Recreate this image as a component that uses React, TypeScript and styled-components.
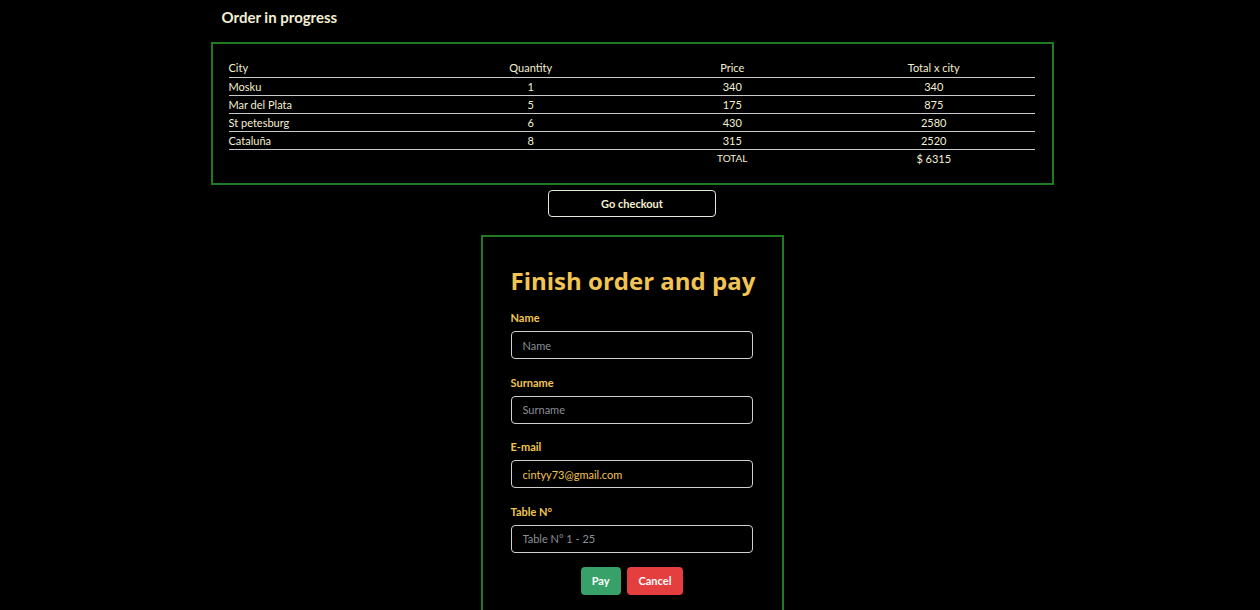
import React from "react";
import styled, { createGlobalStyle } from "styled-components";

const Global = createGlobalStyle`
  html, body { margin: 0; padding: 0; background: #000; }
  body { font-family: "Lato", "Noto Sans", sans-serif; color: #f3efd4; }
  * { box-sizing: border-box; }
`;

const Shell = styled.div`
  padding-left: 4px;
`;

const Page = styled.div`
  width: 843px;
  margin: 0 auto;
  padding-top: 8px;
  display: flex;
  flex-direction: column;
  align-items: center;
`;

const Title = styled.h2`
  align-self: stretch;
  margin: 0;
  padding-left: 11px;
  font-size: 15px;
  line-height: 18px;
  font-weight: 700;
  color: #f3efd4;
`;

const OrderBox = styled.section`
  width: 100%;
  margin-top: 16px;
  border: 2px solid #1f7a22;
  padding: 15px 17px 16px 16px;
`;

const Table = styled.table`
  width: 100%;
  table-layout: fixed;
  border-collapse: collapse;
  font-size: 11px;
  color: #f3efd4;
`;

const Row = styled.tr<{ $line?: boolean }>`
  height: 18px;
  border-bottom: ${(p) => (p.$line ? "1px solid #c9c9c9" : "none")};
`;

const Cell = styled.td<{ $left?: boolean; $small?: boolean }>`
  padding: 0;
  text-align: ${(p) => (p.$left ? "left" : "center")};
  vertical-align: middle;
  line-height: 17px;
  font-size: ${(p) => (p.$small ? "10px" : "11px")};
  font-weight: 400;
`;

const CheckoutButton = styled.button`
  margin-top: 5px;
  width: 168px;
  height: 27px;
  background: #000;
  border: 1px solid #e9e6da;
  border-radius: 4px;
  color: #f3efd4;
  font-family: inherit;
  font-size: 11px;
  font-weight: 700;
`;

const FormBox = styled.form`
  margin-top: 18px;
  width: 303px;
  border: 2px solid #1f7a22;
  border-bottom: none;
  padding: 28px 28px 20px 28px;
  display: flex;
  flex-direction: column;
`;

const Heading = styled.h1`
  margin: 0;
  font-family: "Open Sans", "Lato", sans-serif;
  font-size: 24px;
  line-height: 32px;
  font-weight: 700;
  color: #f2c552;
  white-space: nowrap;
`;

const Field = styled.div`
  display: flex;
  flex-direction: column;
  gap: 5px;
  margin-top: 12px;
  & + & { margin-top: 14.5px; }
`;

const Label = styled.label`
  font-size: 11px;
  line-height: 17px;
  font-weight: 700;
  color: #f2c552;
`;

const Input = styled.input`
  width: 242px;
  height: 28px;
  background: #000;
  border: 1px solid #cfcfcf;
  border-radius: 4px;
  padding: 0 11px;
  font-family: inherit;
  font-size: 11px;
  color: #f2c552;
  outline: none;
  &::placeholder { color: #8a8f98; }
`;

const Actions = styled.div`
  margin-top: 14px;
  display: flex;
  justify-content: center;
  gap: 6px;
`;

const ActionButton = styled.button<{ $tone: "pay" | "cancel" }>`
  height: 28px;
  padding: 0 ${(p) => (p.$tone === "pay" ? "11px" : "12px")};
  border: none;
  border-radius: 4px;
  background: ${(p) => (p.$tone === "pay" ? "#38a169" : "#e53e3e")};
  color: #fff;
  font-family: inherit;
  font-size: 11px;
  font-weight: 700;
`;

const rows = [
  { city: "Mosku", qty: 1, price: 340, total: 340 },
  { city: "Mar del Plata", qty: 5, price: 175, total: 875 },
  { city: "St petesburg", qty: 6, price: 430, total: 2580 },
  { city: "Cataluña", qty: 8, price: 315, total: 2520 },
];

export default function App() {
  return (
    <Shell>
      <Global />
      <Page>
        <Title>Order in progress</Title>
        <OrderBox>
          <Table>
            <tbody>
              <Row $line>
                <Cell $left>City</Cell>
                <Cell>Quantity</Cell>
                <Cell>Price</Cell>
                <Cell>Total x city</Cell>
              </Row>
              {rows.map((r) => (
                <Row $line key={r.city}>
                  <Cell $left>{r.city}</Cell>
                  <Cell>{r.qty}</Cell>
                  <Cell>{r.price}</Cell>
                  <Cell>{r.total}</Cell>
                </Row>
              ))}
              <Row>
                <Cell $left></Cell>
                <Cell></Cell>
                <Cell $small>TOTAL</Cell>
                <Cell>$ 6315</Cell>
              </Row>
            </tbody>
          </Table>
        </OrderBox>
        <CheckoutButton type="button">Go checkout</CheckoutButton>
        <FormBox onSubmit={(e) => e.preventDefault()}>
          <Heading>Finish order and pay</Heading>
          <Field>
            <Label>Name</Label>
            <Input placeholder="Name" />
          </Field>
          <Field>
            <Label>Surname</Label>
            <Input placeholder="Surname" />
          </Field>
          <Field>
            <Label>E-mail</Label>
            <Input defaultValue="cintyy73@gmail.com" />
          </Field>
          <Field>
            <Label>Table N°</Label>
            <Input placeholder="Table N° 1 - 25" />
          </Field>
          <Actions>
            <ActionButton type="submit" $tone="pay">Pay</ActionButton>
            <ActionButton type="button" $tone="cancel">Cancel</ActionButton>
          </Actions>
        </FormBox>
      </Page>
    </Shell>
  );
}
